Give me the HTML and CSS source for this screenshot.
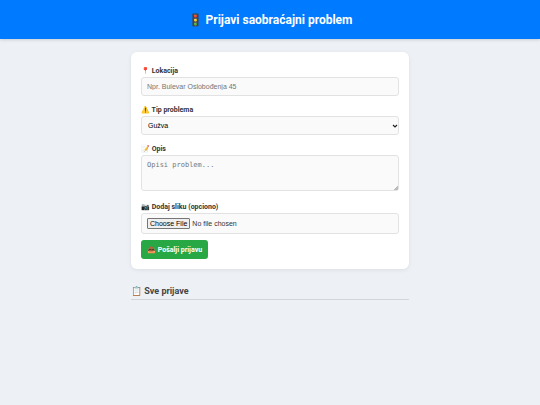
FILE: index.html
```
<!DOCTYPE html>
<html lang="bs">
<head>
<meta charset="UTF-8">
<meta name="viewport" content="width=device-width, initial-scale=1.0">
<title>Prijavi saobraćajni problem</title>
<link rel="stylesheet" href="styles.css">
</head>
<body>
<header>
    <h1>🚦 Prijavi saobraćajni problem</h1>
</header>
<main>
    <form class="card">
        <div class="field">
            <label for="lokacija">📍 Lokacija</label>
            <input type="text" id="lokacija" placeholder="Npr. Bulevar Oslobođenja 45">
        </div>
        <div class="field">
            <label for="tip">⚠️ Tip problema</label>
            <div class="select-wrap">
                <select id="tip">
                    <option>Gužva</option>
                </select>
                <svg class="arrow" viewBox="0 0 6 4" aria-hidden="true">
                    <path d="M1 1l2 2 2-2" fill="none" stroke="#222" stroke-width="1.2"/>
                </svg>
            </div>
        </div>
        <div class="field">
            <label for="opis">📝 Opis</label>
            <textarea id="opis" placeholder="Opisi problem..."></textarea>
        </div>
        <div class="field">
            <label for="slika">📷 Dodaj sliku (opciono)</label>
            <input type="file" id="slika" accept="image/*">
        </div>
        <button type="submit">📤 Pošalji prijavu</button>
    </form>
    <section>
        <h2>📋 Sve prijave</h2>
        <div id="prijave"></div>
    </section>
</main>
</body>
</html>
```
FILE: styles.css
```
* {
    box-sizing: border-box;
}

body {
    margin: 0;
    background-color: #edf1f5;
    color: #333;
    font-family: Roboto, sans-serif;
}

header {
    padding: 13px 12px 11px;
    background-color: #007bff;
    color: white;
    text-align: center;
    box-shadow: 0 1px 3px rgba(0, 0, 0, 0.15);
}

h1 {
    margin: 0;
    font-size: 12px;
    line-height: 15px;
}

main {
    max-width: 278px;
    margin: 13px auto;
}

.card {
    padding: 15px 10px 10px;
    background-color: white;
    border-radius: 6px;
    box-shadow: 0 1px 4px rgba(0, 0, 0, 0.08);
}

.field {
    margin-bottom: 10px;
}

.field:last-of-type {
    margin-bottom: 6px;
}

label {
    display: block;
    margin-bottom: 1px;
    font-size: 7px;
    font-weight: bold;
    line-height: 9px;
}

input,
select,
textarea {
    display: block;
    width: 100%;
    height: 19px;
    padding: 5px;
    background-color: #fafafa;
    border: 1px solid #e2e2e2;
    border-radius: 3px;
    font-family: "Liberation Sans", sans-serif;
    font-size: 7px;
}

.select-wrap {
    position: relative;
}

select {
    padding: 0 6px;
    color: #000;
    appearance: none;
}

.arrow {
    position: absolute;
    top: 8px;
    right: 1px;
    width: 6px;
    height: 4px;
    pointer-events: none;
}

textarea {
    height: 36px;
    margin-bottom: 12px;
    font-family: "DejaVu Sans Mono", monospace;
    resize: vertical;
}

textarea::-webkit-resizer {
    background: linear-gradient(135deg, transparent 50%, #bbb 50%) right bottom / 4px 4px no-repeat;
}

input[type="file"] {
    height: 21px;
    padding: 4px 5px;
    line-height: 11px;
}

input::file-selector-button {
    height: 11px;
    margin: 0 2px 0 0;
    padding: 0 2px;
    background-color: #efefef;
    border: 1px solid #767676;
    border-radius: 1px;
    font-family: "Liberation Sans", sans-serif;
    font-size: 7px;
    line-height: 9px;
}

button {
    display: block;
    padding: 6px 6px 4px;
    background-color: #28a745;
    color: white;
    border: none;
    border-radius: 3px;
    font-family: Roboto, sans-serif;
    font-size: 7px;
    font-weight: bold;
    line-height: 9px;
}

h2 {
    margin: 16px 0 8px;
    padding-bottom: 2px;
    border-bottom: 1px solid #d0d6da;
    color: #444;
    font-size: 9px;
    line-height: 12px;
}
```
